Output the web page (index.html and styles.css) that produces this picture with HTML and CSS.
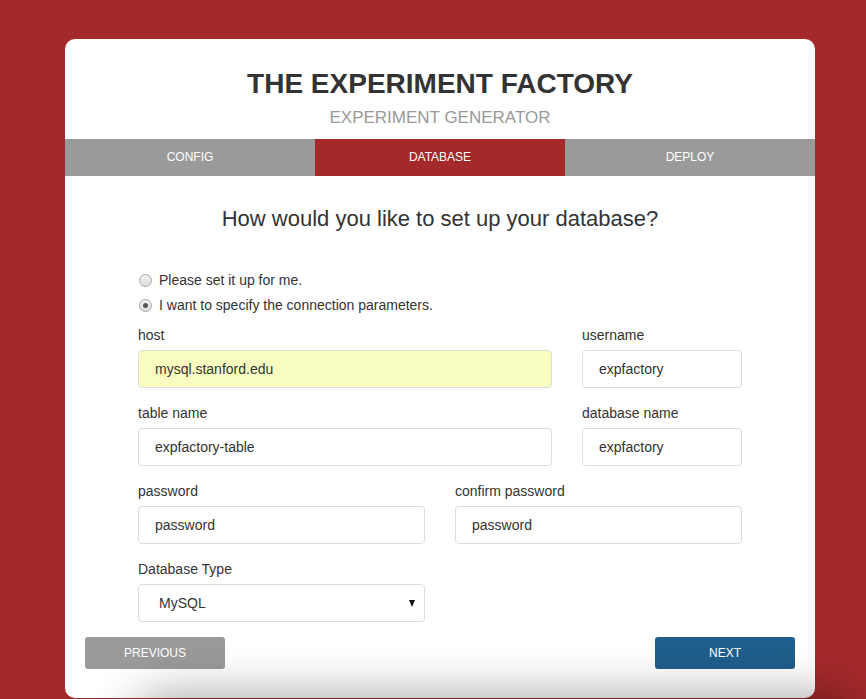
FILE: index.html
```html
<!DOCTYPE html>
<html lang="en">
<head>
<meta charset="utf-8">
<title>The Experiment Factory</title>
<link rel="stylesheet" href="styles.css">
</head>
<body>
<div class="card">
  <header class="head">
    <h1 class="title">THE EXPERIMENT FACTORY</h1>
    <h2 class="subtitle">EXPERIMENT GENERATOR</h2>
  </header>
  <nav class="tabs">
    <div class="tab">CONFIG</div>
    <div class="tab active">DATABASE</div>
    <div class="tab">DEPLOY</div>
  </nav>
  <h3 class="question">How would you like to set up your database?</h3>
  <form class="form">
    <div class="radios">
      <label class="radio"><span class="dot"></span>Please set it up for me.</label>
      <label class="radio"><span class="dot checked"></span>I want to specify the connection parameters.</label>
    </div>
    <div class="row wide">
      <div class="field"><div class="lbl">host</div><div class="input autofill">mysql.stanford.edu</div></div>
      <div class="field"><div class="lbl">username</div><div class="input">expfactory</div></div>
    </div>
    <div class="row wide">
      <div class="field"><div class="lbl">table name</div><div class="input">expfactory-table</div></div>
      <div class="field"><div class="lbl">database name</div><div class="input">expfactory</div></div>
    </div>
    <div class="row half">
      <div class="field"><div class="lbl">password</div><div class="input">password</div></div>
      <div class="field"><div class="lbl">confirm password</div><div class="input">password</div></div>
    </div>
    <div class="row half">
      <div class="field"><div class="lbl">Database Type</div><div class="input select">MySQL<span class="caret"></span></div></div>
    </div>
  </form>
  <div class="actions">
    <div class="btn prev">PREVIOUS</div>
    <div class="btn next">NEXT</div>
  </div>
</div>
</body>
</html>
```

FILE: styles.css
```css
html, body {
  margin: 0;
  padding: 0;
  overflow: hidden;
  height: 100%;
}
body {
  background: #a3292b;
  font-family: "Liberation Sans", Arial, sans-serif;
  color: #333;
}
.card {
  position: relative;
  width: 750px;
  margin: 39px 0 0 65px;
  background: #fff;
  border-radius: 10px;
  height: 659px;
  box-sizing: border-box;
  padding-top: 29px;
}
.card::after {
  content: "";
  position: absolute;
  left: 70px;
  right: -40px;
  top: calc(100% + 4px);
  height: 120px;
  border-radius: 40px;
  box-shadow: 0 0 44px 10px rgba(0, 0, 0, 0.32);
}
.head { text-align: center; }
.title {
  margin: 0;
  font-size: 28px;
  line-height: 32px;
  font-weight: bold;
  color: #333;
}
.subtitle {
  margin: 8px 0 0;
  font-size: 17px;
  line-height: 20px;
  font-weight: normal;
  color: #999;
}
.tabs {
  margin-top: 11px;
  display: grid;
  grid-template-columns: 1fr 1fr 1fr;
  height: 37px;
  background: #9a9a9a;
}
.tab {
  text-align: center;
  line-height: 37px;
  font-size: 12px;
  color: #fff;
}
.tab.active { background: #a3292b; }
.question {
  margin: 30px 0 0;
  text-align: center;
  font-size: 22px;
  line-height: 26px;
  font-weight: normal;
  color: #333;
}
.form {
  width: 604px;
  margin: 38px 0 0 73px;
}
.radios {
  display: flex;
  flex-direction: column;
  gap: 5px;
  margin-bottom: 10px;
}
.radio {
  display: flex;
  align-items: center;
  font-size: 14px;
  line-height: 20px;
  color: #333;
}
.dot {
  box-sizing: border-box;
  width: 13px;
  height: 13px;
  border-radius: 50%;
  border: 1px solid #a8a8a8;
  background: linear-gradient(#f4f4f4, #dcdcdc);
  margin: 0 7px 0 1px;
  position: relative;
}
.dot.checked::after {
  content: "";
  position: absolute;
  left: 3px;
  top: 3px;
  width: 5px;
  height: 5px;
  border-radius: 50%;
  background: #555;
}
.row {
  display: grid;
  column-gap: 30px;
  margin-bottom: 15px;
}
.row.wide { grid-template-columns: 414px 160px; }
.row.half { grid-template-columns: 287px 287px; }
.lbl {
  font-size: 14px;
  line-height: 20px;
  margin-bottom: 5px;
  color: #333;
}
.input {
  position: relative;
  box-sizing: border-box;
  height: 38px;
  border: 1px solid #ddd;
  border-radius: 4px;
  padding-left: 16px;
  font-size: 14px;
  line-height: 36px;
  color: #333;
  background: #fff;
}
.input.autofill { background: #fafdc0; }
.input.select { padding-left: 20px; }
.caret {
  position: absolute;
  right: 9px;
  top: 15px;
  width: 0;
  height: 0;
  border-left: 3px solid transparent;
  border-right: 3px solid transparent;
  border-top: 7px solid #111;
}
.actions {
  display: flex;
  justify-content: space-between;
  padding: 0 20px;
  margin-top: 0;
}
.btn {
  width: 140px;
  height: 32px;
  line-height: 32px;
  text-align: center;
  border-radius: 3px;
  font-size: 12px;
  color: #fff;
}
.btn.prev { background: #9a9a9a; }
.btn.next { background: #1f5f8b; }
```
